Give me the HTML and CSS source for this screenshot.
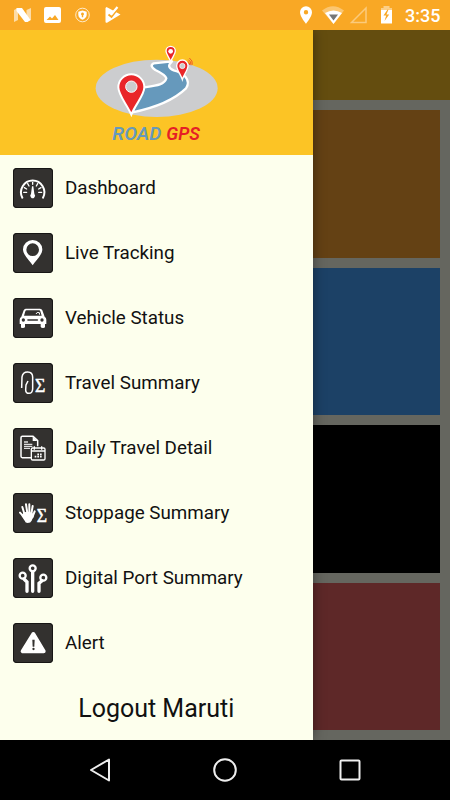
FILE: index.html
```html
<!DOCTYPE html>
<html lang="en">
<head>
    <meta charset="UTF-8">
    <meta name="viewport" content="width=device-width, initial-scale=1.0">
    <title>Road GPS</title>
    <link rel="stylesheet" href="styles.css">
</head>
<body>
    <!-- Status Bar -->
    <div class="status-bar">
        <svg class="status-icons" viewBox="0 0 400 30" width="400" height="30" fill="#fff">
            <path d="M14 10l4-2v12l-4 2zM26.500 10l4.500-2v12l-4.500 2z" opacity=".6"/>
            <path d="M16.500 8h5.500l8.500 12-3 2h-2.500L16.500 11z"/>
            <path fill-rule="evenodd" d="M46 7h13a2 2 0 0 1 2 2v12a2 2 0 0 1-2 2H46a2 2 0 0 1-2-2V9a2 2 0 0 1 2-2zM46.500 20h12l-3.500-5-3 3.500-2-2z"/>
            <circle cx="82.500" cy="15" r="6.800" fill="none" stroke="#fff" opacity=".75"/>
            <path fill-rule="evenodd" d="M82.500 10.500l4.200 1.300v3c0 2.500-2 4-4.200 5-2.200-1-4.200-2.500-4.200-5v-3zM82.500 12.500a1.500 1.500 0 0 0-.7 2.800v2h1.400v-2a1.500 1.500 0 0 0-.7-2.800z"/>
            <path d="M106.500 7l14 7.500-13.500 8.200q-1.500.4-1.500-1V8z"/>
            <path d="M108.500 14.500l3 2.500 7-9" fill="none" stroke="#f9a825" stroke-width="1.800"/>
            <path d="M110 12l2 1.500 5.500-6.500" fill="none" stroke="#fff" stroke-width="2.200"/>
            <path fill-rule="evenodd" d="M306 6.200a6 6 0 0 0-6 6c0 4.500 6 11.500 6 11.500s6-7 6-11.500a6 6 0 0 0-6-6zM306 10a2.200 2.200 0 1 0 0 4.400 2.200 2.200 0 0 0 0-4.400z"/>
            <path d="M322 10.500q11-8.500 22 0L333.500 24z" opacity=".35"/>
            <path d="M325 13q8.500-5 17 0l-8.500 11z"/>
            <path d="M329 14.500h9l-4.500 6z" fill="#777"/>
            <path d="M351.500 22.500L366 8v14.500z" fill="none" stroke="#fff" stroke-width="1.500" opacity=".4"/>
            <path d="M383.500 6h6v2h2.500v4h-11V8h2.500z" opacity=".45"/>
            <path d="M381 10h11v13.500h-11z"/>
            <path d="M387.500 9.500l-4 6h2.700l-1.700 5.500 4.700-6.500h-2.800l2.100-5z" fill="#f9a825"/>
        </svg>
        <span class="clock">3:35</span>
    </div>

    <div class="screen">
        <!-- Side Drawer -->
        <div class="drawer">
            <div class="drawer-header">
                <svg class="logo" viewBox="0 0 450 357" width="150" height="119">
                    <ellipse cx="230" cy="157" rx="183" ry="86" fill="#cccdcf"/>
                    <path d="M157 229C240 212 287 187 318 157C335 132 310 110 281 103C265 97 263 88 276 76L221 82C211 88 214 94 226 102C243 110 257 118 259 127C254 147 228 149 188 155z" fill="#6699bc" stroke="#fff" stroke-width="7" stroke-linejoin="round"/>
                    <path fill-rule="evenodd" d="M154 236C141 205 115 178 115 154A38 38 0 0 1 193 154C193 178 166 205 154 236z" fill="#e92529" stroke="#fff" stroke-width="6"/>
                    <circle cx="154" cy="152" r="17" fill="#cccdcf" stroke="#fff" stroke-width="3"/>
                    <path d="M272 77C268 64 258 55 258 45A14 14 0 0 1 286 45C286 55 276 64 272 77z" fill="#e92529" stroke="#fff" stroke-width="4"/>
                    <circle cx="272" cy="46" r="7" fill="#fff"/>
                    <path d="M307 131C302 115 290 102 290 89A17 17 0 0 1 324 89C324 102 312 115 307 131z" fill="#e92529" stroke="#fff" stroke-width="4"/>
                    <circle cx="307" cy="90" r="8" fill="#cccdcf" stroke="#fff" stroke-width="2"/>
                    <path d="M323 76q6 3 6 11M325 71q9 5 8 17M328 66q11 8 9 20" fill="none" stroke="#e92529" stroke-width="2"/>
                    <text class="logo-text" x="97" y="311" textLength="147" lengthAdjust="spacingAndGlyphs" fill="#6699bc">ROAD</text>
                    <text class="logo-text" x="259" y="311" textLength="101" lengthAdjust="spacingAndGlyphs" fill="#e51f26">GPS</text>
                </svg>
            </div>

            <div class="menu">
                <a class="menu-item">
                    <svg class="menu-icon" viewBox="0 0 120 120">
                        <g fill="none" stroke="#fff" stroke-linecap="round">
                            <path d="M28 89A35 35 0 1 1 90 89" stroke-width="6"/>
                            <path d="M59 43v6M44 47l4 7M74 47l-4 7M34 59l7 4M84 59l-7 4M32 73h9M86 73h-9" stroke-width="4"/>
                        </g>
                        <path d="M57 55h4l3 22a7 8 0 1 1-10 0z" fill="#fff"/>
                    </svg>
                    <span>Dashboard</span>
                </a>
                <a class="menu-item">
                    <svg class="menu-icon" viewBox="0 0 120 120">
                        <path fill-rule="evenodd" d="M59 97C51 83 30 67 30 49A29 28 0 0 1 88 49C88 67 67 83 59 97zM59 31A19 19 0 1 0 59 69A19 19 0 1 0 59 31z" fill="#fff"/>
                    </svg>
                    <span>Live Tracking</span>
                </a>
                <a class="menu-item">
                    <svg class="menu-icon" viewBox="0 0 120 120">
                        <path fill-rule="evenodd" d="M38 32h43q5 0 7 5l7 19q5 3 5 9v13h-4v8q0 4-6 4t-7-4v-8H36v8q0 4-7 4t-5-4v-8h-4V65q0-6 5-9l7-19q2-5 6-5zM41 37q-3 0-4 3l-4 13h53l-4-13q-1-3-4-3z" fill="#fff"/>
                        <circle cx="31" cy="66" r="5" fill="#33312f"/>
                        <circle cx="87" cy="66" r="5" fill="#33312f"/>
                        <path d="M45 66h28" stroke="#33312f" stroke-width="5" stroke-linecap="round"/>
                        <path d="M69 48q2-7 10-4l1 6" stroke="#fff" stroke-width="3" fill="none"/>
                    </svg>
                    <span>Vehicle Status</span>
                </a>
                <a class="menu-item">
                    <svg class="menu-icon" viewBox="0 0 120 120">
                        <path d="M26 75L27 42Q29 27 44 27Q59 27 59 43V78Q58 91 48 91Q38 91 38 80L39 66L45 54" fill="none" stroke="#fff" stroke-width="4.500"/>
                        <text class="sigma" x="66" y="87" textLength="31" lengthAdjust="spacingAndGlyphs">Σ</text>
                    </svg>
                    <span>Travel Summary</span>
                </a>
                <a class="menu-item">
                    <svg class="menu-icon" viewBox="0 0 120 120">
                        <path d="M54 89H28q-4 0-4-4V29q0-4 4-4h32l14 13v17" fill="none" stroke="#fff" stroke-width="4.500"/>
                        <path d="M59 26v13h14z" fill="#fff"/>
                        <path d="M33 42h12M33 49h25M33 55h25M33 61h18" stroke="#ddd" stroke-width="4"/>
                        <rect x="55" y="60" width="41" height="36" rx="4" fill="#33312f" stroke="#fff" stroke-width="4"/>
                        <path d="M55 69h41M64 55v10M86 55v10" stroke="#fff" stroke-width="4"/>
                        <path d="M73 79h5M81 79h5M65 86h5M73 86h5M81 86h5" stroke="#fff" stroke-width="5"/>
                    </svg>
                    <span>Daily Travel Detail</span>
                </a>
                <a class="menu-item">
                    <svg class="menu-icon" viewBox="0 0 120 120">
                        <g fill="none" stroke="#fff" stroke-width="6" stroke-linecap="round">
                            <path d="M35 65L28 42M43 60L39 34M49 60V34M55 63L59 39M58 73L65 55M36 75L21 59"/>
                        </g>
                        <path d="M32 59q13-6 27 2l3 10q-4 6-6 12-3 7-12 7-7 0-9-7L25 68z" fill="#fff"/>
                        <text class="sigma" x="71" y="86" textLength="31" lengthAdjust="spacingAndGlyphs">Σ</text>
                    </svg>
                    <span>Stoppage Summary</span>
                </a>
                <a class="menu-item">
                    <svg class="menu-icon" viewBox="0 0 120 120">
                        <g fill="none" stroke="#fff">
                            <circle cx="59" cy="31" r="9" stroke-width="7"/>
                            <circle cx="29" cy="53" r="9" stroke-width="7"/>
                            <circle cx="91" cy="59" r="9" stroke-width="7"/>
                            <path d="M59 42v58M33 63l9 9v28M87 68l-9 8v24" stroke-width="10" stroke-linecap="round"/>
                        </g>
                    </svg>
                    <span>Digital Port Summary</span>
                </a>
                <a class="menu-item">
                    <svg class="menu-icon" viewBox="0 0 120 120">
                        <path d="M61 33L29 85H92z" fill="#fff" stroke="#fff" stroke-width="12" stroke-linejoin="round"/>
                        <path d="M58 50h7l-1 21h-5z" fill="#33312f"/>
                        <circle cx="61.500" cy="78" r="3.500" fill="#33312f"/>
                    </svg>
                    <span>Alert</span>
                </a>
            </div>

            <a class="logout">Logout Maruti</a>
        </div>

        <!-- Dimmed page behind the drawer -->
        <div class="page">
            <div class="toolbar"></div>
            <div class="tiles">
                <div class="tile tile-orange"></div>
                <div class="tile tile-blue"></div>
                <div class="tile tile-black"></div>
                <div class="tile tile-red"></div>
            </div>
        </div>
    </div>

    <!-- Navigation Bar -->
    <div class="nav-bar">
        <svg width="24" height="24" viewBox="0 0 24 24"><path d="M3 12L21 1.500v21z"/></svg>
        <svg width="24" height="24" viewBox="0 0 24 24"><circle cx="12" cy="12" r="10.800"/></svg>
        <svg width="24" height="24" viewBox="0 0 24 24"><rect x="2.500" y="2.500" width="19" height="19" rx="1"/></svg>
    </div>
</body>
</html>
```
FILE: styles.css
```css
* {
    margin: 0;
    padding: 0;
    box-sizing: border-box;
    font-family: Roboto, sans-serif;
}

body {
    background-color: #000000;
    height: 100vh;
    display: flex;
    flex-direction: column;
    overflow: hidden;
}

.status-bar {
    height: 30px;
    background-color: #f9a825;
    display: flex;
    align-items: center;
    flex-shrink: 0;
}

.status-icons {
    flex-shrink: 0;
}

.clock {
    margin-left: 5px;
    color: #ffffff;
    font-size: 18px;
    font-weight: 500;
}

.screen {
    flex: 1;
    display: flex;
    min-height: 0;
    overflow: hidden;
}

.drawer {
    width: 312.5px;
    flex-shrink: 0;
    display: flex;
    flex-direction: column;
    background-color: #fdffed;
    box-shadow: 0 0 12px rgba(0, 0, 0, 0.4);
    z-index: 1;
}

.drawer-header {
    height: 125px;
    padding: 6px 0 0 80px;
    background-color: #fcc425;
}

.logo {
    display: block;
}

.logo-text {
    font-size: 55px;
    font-weight: 600;
    font-style: italic;
}

.menu-item {
    height: 65px;
    padding-left: 12.5px;
    display: flex;
    align-items: center;
    gap: 12.5px;
    color: #111111;
    font-size: 18.8px;
}

.menu-item span {
    padding-top: 1px;
}

.menu-icon {
    width: 40px;
    height: 40px;
    border-radius: 4px;
    box-shadow: inset 0 0 0 1px #171615;
    background-color: #33312f;
}

.sigma {
    fill: #ffffff;
    stroke: #ffffff;
    stroke-width: 1.5px;
    font-family: "Liberation Serif", serif;
    font-size: 58px;
}

.logout {
    padding-top: 19px;
    text-align: center;
    color: #111111;
    font-size: 25px;
}

.page {
    flex: 1;
    display: flex;
    flex-direction: column;
    background-color: #65665f;
}

.toolbar {
    height: 70px;
    background-color: #644d0f;
}

.tiles {
    flex: 1;
    display: grid;
    grid-template-rows: repeat(4, 1fr);
    gap: 10px;
    padding: 10px 10px 10px 0;
}

.tile-orange {
    background-color: #644114;
}

.tile-blue {
    background-color: #1c4166;
}

.tile-black {
    background-color: #000000;
}

.tile-red {
    background-color: #5e2828;
}

.nav-bar {
    height: 60px;
    padding: 0 88px;
    background-color: #000000;
    display: flex;
    justify-content: space-between;
    align-items: center;
    flex-shrink: 0;
}

.nav-bar svg {
    fill: none;
    stroke: #eeeeee;
    stroke-width: 2;
    stroke-linejoin: round;
}
```
